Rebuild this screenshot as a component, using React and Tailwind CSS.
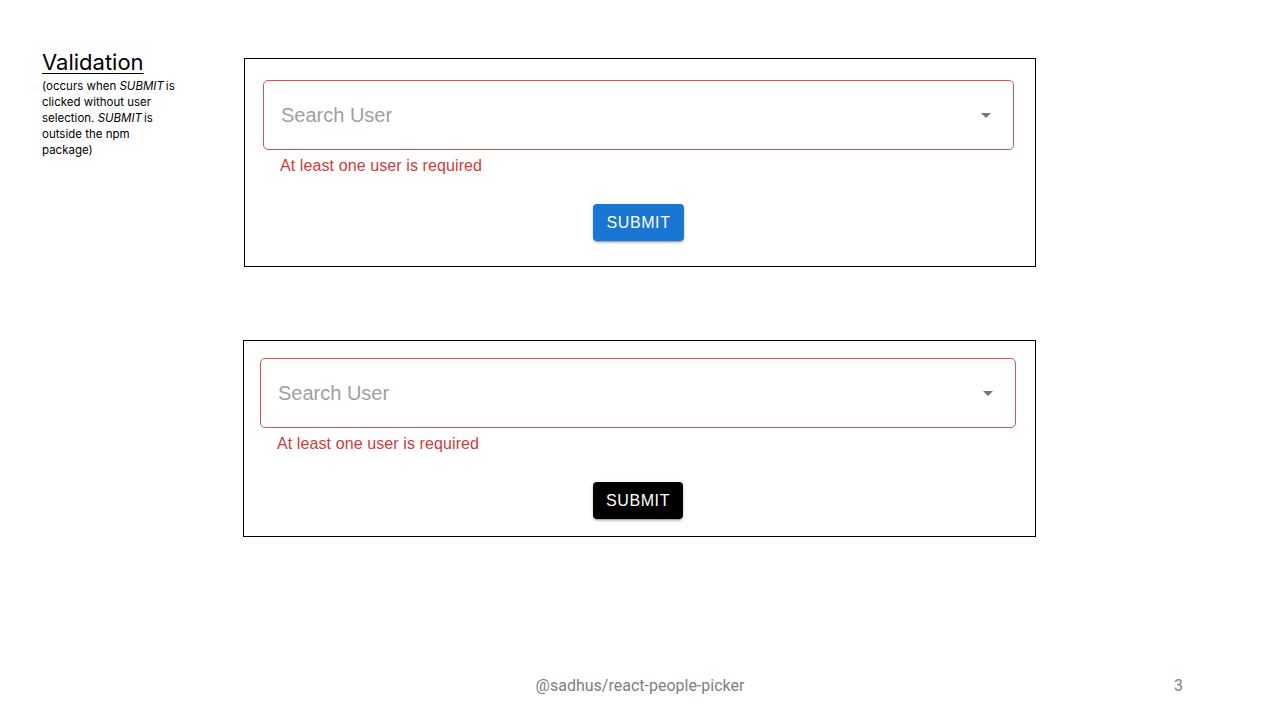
const ArrowDrop = () => (
  <svg width="24" height="24" viewBox="0 0 24 24" className="fill-[#757575]">
    <path d="M7 10l5 5 5-5z" />
  </svg>
);

const Picker = ({ buttonClass }) => (
  <>
    <div className="h-[70px] flex items-center justify-between pl-[17px] pr-[15px] border border-[#d9534f] rounded-[5px]">
      <span className="text-[20px] text-[#a0a0a0] font-['Liberation_Sans',sans-serif]">
        Search User
      </span>
      <ArrowDrop />
    </div>
    <p className="mt-[6px] pl-[17px] text-[16px] leading-[20px] tracking-[0.1px] text-[#d03b3b] font-['Liberation_Sans',sans-serif]">
      At least one user is required
    </p>
    <div className="flex justify-center">
      <button
        className={`h-[37px] px-[13px] mt-[28px] rounded-[4px] text-white text-[16px] tracking-[0.6px] font-['Liberation_Sans',sans-serif] shadow-[0_3px_1px_-2px_rgba(0,0,0,0.2),0_2px_2px_0_rgba(0,0,0,0.14),0_1px_5px_0_rgba(0,0,0,0.12)] ${buttonClass}`}
      >
        SUBMIT
      </button>
    </div>
  </>
);

export default function App() {
  return (
    <div className="w-[1280px] h-[720px] bg-white flex flex-col justify-between text-black">
      <div className="flex pt-[48px] pl-[42px]">
        <div className="w-[202px] shrink-0 font-['Inter',sans-serif]">
          <h1 className="text-[22px] leading-[28px] underline underline-offset-[3px] decoration-1">
            Validation
          </h1>
          <p className="w-[140px] mt-[2px] text-[11.5px] leading-[16px]">
            (occurs when <i className="pr-[2px]">SUBMIT</i>is clicked without user selection.{" "}
            <i className="pr-[2px]">SUBMIT</i>is outside the npm package)
          </p>
        </div>

        <div className="flex flex-col">
          <div className="mt-[10px] w-[792px] h-[209px] border border-black pt-[21px] pl-[18px] pr-[21px]">
            <Picker buttonClass="bg-[#1976d2]" />
          </div>

          <div className="mt-[73px] -ml-[1px] w-[793px] h-[197px] border border-black pt-[17px] pl-[16px] pr-[19px]">
            <Picker buttonClass="bg-black" />
          </div>
        </div>
      </div>

      <div className="grid grid-cols-[1fr_auto_1fr] pb-[24px] text-[16px] leading-[20px] text-[#808080] font-['Roboto',sans-serif]">
        <div />
        <span>@sadhus/react-people-picker</span>
        <div className="flex justify-end pr-[97px]">
          <span>3</span>
        </div>
      </div>
    </div>
  );
}
